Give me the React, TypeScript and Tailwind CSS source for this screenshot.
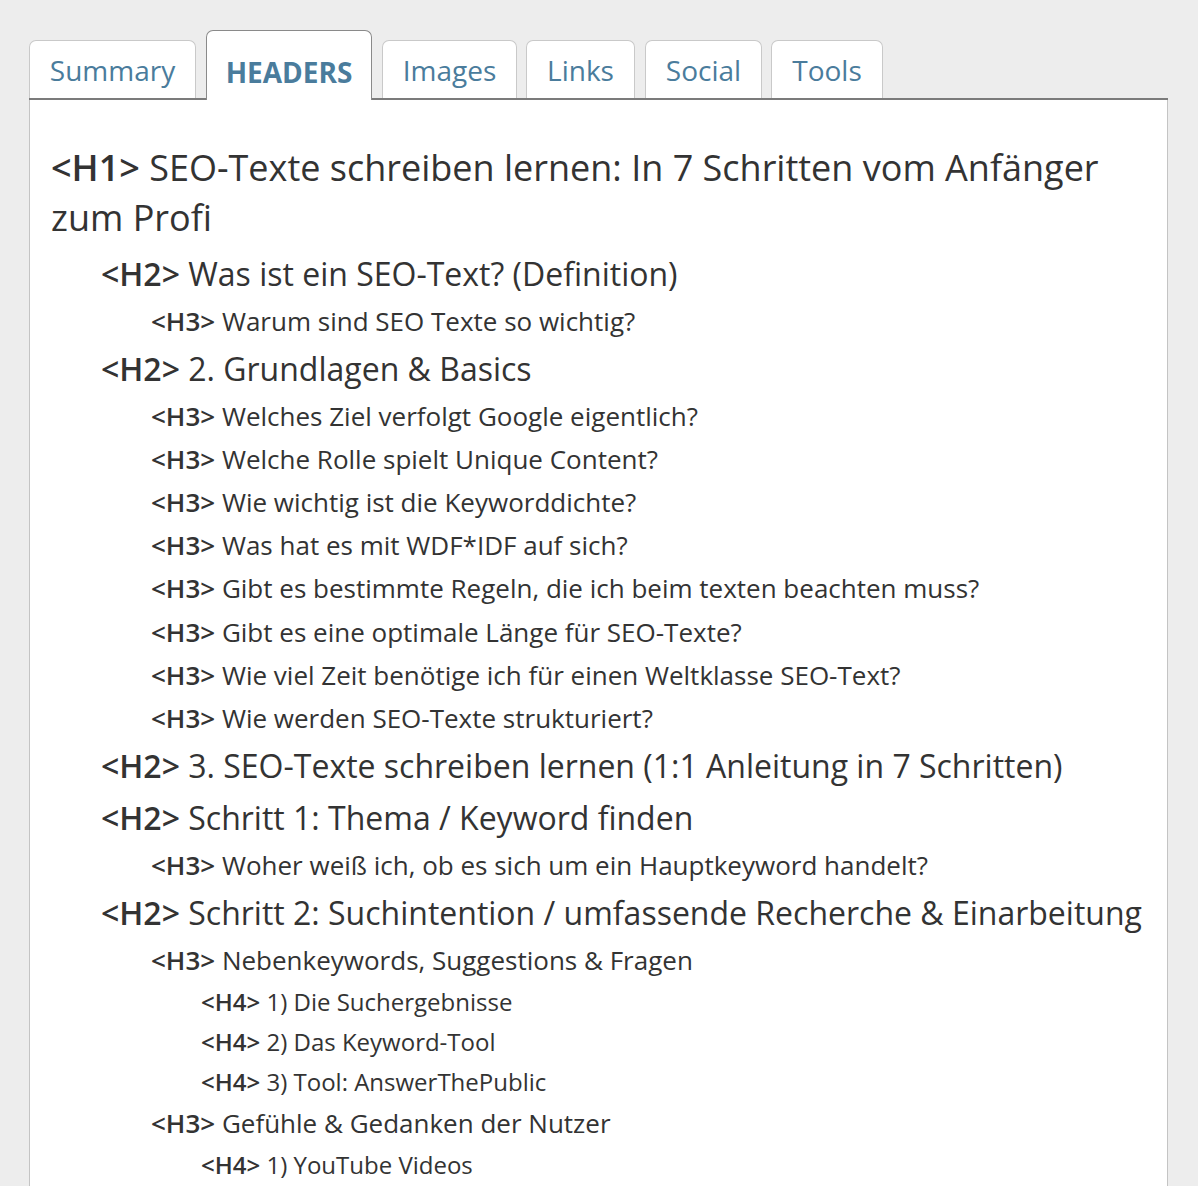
import React from "react";

type Item = { level: 1 | 2 | 3 | 4; text: string };

const items: Item[] = [
  { level: 1, text: "SEO-Texte schreiben lernen: In 7 Schritten vom Anfänger zum Profi" },
  { level: 2, text: "Was ist ein SEO-Text? (Definition)" },
  { level: 3, text: "Warum sind SEO Texte so wichtig?" },
  { level: 2, text: "2. Grundlagen & Basics" },
  { level: 3, text: "Welches Ziel verfolgt Google eigentlich?" },
  { level: 3, text: "Welche Rolle spielt Unique Content?" },
  { level: 3, text: "Wie wichtig ist die Keyworddichte?" },
  { level: 3, text: "Was hat es mit WDF*IDF auf sich?" },
  { level: 3, text: "Gibt es bestimmte Regeln, die ich beim texten beachten muss?" },
  { level: 3, text: "Gibt es eine optimale Länge für SEO-Texte?" },
  { level: 3, text: "Wie viel Zeit benötige ich für einen Weltklasse SEO-Text?" },
  { level: 3, text: "Wie werden SEO-Texte strukturiert?" },
  { level: 2, text: "3. SEO-Texte schreiben lernen (1:1 Anleitung in 7 Schritten)" },
  { level: 2, text: "Schritt 1: Thema / Keyword finden" },
  { level: 3, text: "Woher weiß ich, ob es sich um ein Hauptkeyword handelt?" },
  { level: 2, text: "Schritt 2: Suchintention / umfassende Recherche & Einarbeitung" },
  { level: 3, text: "Nebenkeywords, Suggestions & Fragen" },
  { level: 4, text: "1) Die Suchergebnisse" },
  { level: 4, text: "2) Das Keyword-Tool" },
  { level: 4, text: "3) Tool: AnswerThePublic" },
  { level: 3, text: "Gefühle & Gedanken der Nutzer" },
  { level: 4, text: "1) YouTube Videos" },
];

const levelClass: Record<number, string> = {
  1: "text-[36px] leading-[50px] mb-[5px] pl-0",
  2: "text-[32px] leading-[52px] pl-[50px] whitespace-nowrap",
  3: "text-[26px] leading-[43.1px] pl-[100px] whitespace-nowrap",
  4: "text-[24px] leading-[40px] pl-[150px] whitespace-nowrap",
};

const tabs = [
  { label: "Summary", w: "w-[167px]", mr: "mr-[10px]" },
  { label: "HEADERS", w: "w-[166px]", mr: "mr-[10px]", active: true },
  { label: "Images", w: "w-[135px]", mr: "mr-[9px]" },
  { label: "Links", w: "w-[109px]", mr: "mr-[10px]" },
  { label: "Social", w: "w-[117px]", mr: "mr-[9px]" },
  { label: "Tools", w: "w-[112px]", mr: "mr-0" },
];

export default function App() {
  return (
    <div
      className="w-[1198px] h-[1186px] overflow-hidden bg-[#ededed] pt-[30px] pl-[29px]"
      style={{ fontFamily: '"Open Sans", "Noto Sans", sans-serif' }}
    >
      <div className="w-[1139px]">
        <div className="flex items-end border-b-2 border-[#7b7b7b] h-[70px]">
          {tabs.map((t) =>
            t.active ? (
              <div
                key={t.label}
                className={`${t.w} ${t.mr} h-[70px] -mb-[2px] bg-white border border-b-0 border-[#8a8a8a] rounded-t-[7px] flex items-center justify-center text-[28px] font-bold text-[#4a7c9c] pt-[12px]`}
              >
                {t.label}
              </div>
            ) : (
              <div
                key={t.label}
                className={`${t.w} ${t.mr} h-[58px] bg-white border border-b-0 border-[#c9c9c9] rounded-t-[7px] flex items-center justify-center text-[28px] text-[#4a7c9c]`}
              >
                {t.label}
              </div>
            )
          )}
        </div>
        <div className="bg-white border-l border-r border-[#c4c4c4] pl-[21px] pr-[20px] pt-[43px] h-[1100px] text-[#333333]">
          {items.map((it, i) => (
            <div key={i} className={levelClass[it.level]}>
              <span className="font-semibold">{`<H${it.level}>`}</span> {it.text}
            </div>
          ))}
        </div>
      </div>
    </div>
  );
}
